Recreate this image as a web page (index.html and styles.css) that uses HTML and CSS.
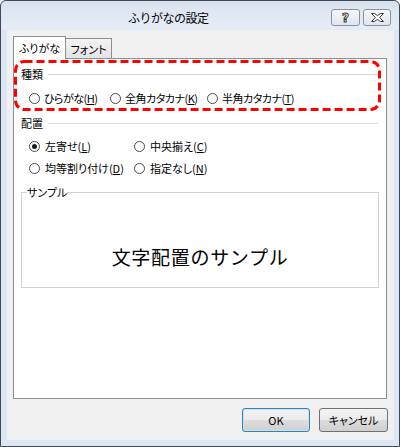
FILE: index.html
```html
<!DOCTYPE html>
<html lang="ja">
<head>
<meta charset="utf-8">
<title>ふりがなの設定</title>
<link rel="stylesheet" href="styles.css">
</head>
<body>
<div class="window">
  <div class="titlebar">
    <div class="title">ふりがなの設定</div>
    <div class="caption-buttons">
      <div class="cap-btn help"><span class="help-glyph">?</span></div>
      <div class="cap-btn close">
        <svg width="13" height="9" viewBox="0 0 13 9"><polygon points="0.5,0.5 3.5,0.5 6.5,2.6 9.5,0.5 12.5,0.5 8.6,4.5 12.5,8.5 9.5,8.5 6.5,6.4 3.5,8.5 0.5,8.5 4.4,4.5" fill="#fff" stroke="#3b3b3b" stroke-width="1" stroke-linejoin="round"/></svg>
      </div>
    </div>
  </div>
  <div class="client">
    <div class="tabs">
      <div class="tab active">ふりがな</div>
      <div class="tab">フォント</div>
    </div>
    <div class="panel">
      <section class="group kind">
        <svg class="highlight" width="367" height="51" viewBox="0 0 367 51"><rect x="1.5" y="1.5" width="364" height="48" rx="9" ry="9" fill="none" stroke="#ff0000" stroke-width="3" stroke-dasharray="8 4"/></svg>
        <div class="group-head"><span>種類</span><span class="rule"></span></div>
        <div class="radio-row">
          <div class="radio"><span class="circle"></span><span>ひらがな(<u>H</u>)</span></div>
          <div class="radio"><span class="circle"></span><span>全角カタカナ(<u>K</u>)</span></div>
          <div class="radio"><span class="circle"></span><span>半角カタカナ(<u>T</u>)</span></div>
        </div>
      </section>
      <section class="group align">
        <div class="group-head"><span>配置</span><span class="rule"></span></div>
        <div class="radio-grid">
          <div class="radio"><span class="circle checked"></span><span>左寄せ(<u>L</u>)</span></div>
          <div class="radio"><span class="circle"></span><span>中央揃え(<u>C</u>)</span></div>
          <div class="radio"><span class="circle"></span><span>均等割り付け(<u>D</u>)</span></div>
          <div class="radio"><span class="circle"></span><span>指定なし(<u>N</u>)</span></div>
        </div>
      </section>
      <fieldset class="sample">
        <legend>サンプル</legend>
        <div class="sample-text">文字配置のサンプル</div>
      </fieldset>
    </div>
    <div class="actions">
      <button class="btn default">OK</button>
      <button class="btn">キャンセル</button>
    </div>
  </div>
</div>
</body>
</html>
```
FILE: styles.css
```css
html, body {
  margin: 0;
  padding: 0;
}
body {
  width: 400px;
  height: 447px;
  overflow: hidden;
  font-family: "Noto Sans CJK JP", "Noto Sans", sans-serif;
  font-size: 11px;
  color: #000;
  background: #fff;
}
.window {
  box-sizing: border-box;
  width: 400px;
  height: 447px;
  border: 1px solid #3e4a57;
  border-radius: 6px 6px 0 0;
  background: linear-gradient(to bottom, #d9e3ef 0, #e6edf6 28px, #dce7f3 29px, #dce7f3 100%);
  padding: 0 5px 6px 6px;
  display: flex;
  flex-direction: column;
}
.titlebar {
  height: 29px;
  flex: none;
  display: flex;
  align-items: flex-start;
}
.title {
  margin-left: 121px;
  padding-top: 9px;
  font-size: 12px;
  line-height: 16px;
  letter-spacing: -0.5px;
  color: #000;
}
.caption-buttons {
  margin-left: auto;
  margin-right: 3px;
  margin-top: 8px;
  display: flex;
  gap: 3px;
}
.cap-btn {
  box-sizing: border-box;
  height: 17px;
  border: 1px solid #8793a1;
  border-radius: 3px;
  background: linear-gradient(to bottom, #f6f8fa, #e1e6ec);
  display: flex;
  align-items: center;
  justify-content: center;
}
.help { width: 29px; }
.close { width: 28px; }
.help-glyph {
  font-family: "DejaVu Sans", sans-serif;
  font-weight: bold;
  font-size: 12px;
  line-height: 12px;
  color: #fff;
  -webkit-text-stroke: 0.9px #333;
}
.client {
  flex: 1;
  background: #f0f0f0;
  display: flex;
  flex-direction: column;
  padding-top: 6px;
}
.tabs {
  display: flex;
  align-items: flex-end;
  height: 22px;
  margin-left: 6px;
  font-feature-settings: "palt";
}
.tab {
  box-sizing: border-box;
  height: 20px;
  width: 46px;
  border: 1px solid #8c8e94;
  border-left: none;
  border-bottom: none;
  background: linear-gradient(to bottom, #f3f3f3, #e4e4e4);
  display: flex;
  align-items: center;
  justify-content: center;
  line-height: 16px;
  padding-top: 1px;
}
.tab.active {
  height: 23px;
  width: 53px;
  border-left: 1px solid #8c8e94;
  background: #fff;
  margin-bottom: -1px;
  position: relative;
  z-index: 1;
  padding-top: 0;
  padding-bottom: 1px;
}
.panel {
  box-sizing: border-box;
  width: 374px;
  height: 341px;
  margin-left: 6px;
  border: 1px solid #8c8e94;
  background: #fff;
  padding: 7px 7px 0 7px;
  font-feature-settings: "palt";
}
.group {
  line-height: 16px;
}
.kind {
  position: relative;
}
.highlight {
  position: absolute;
  left: -7px;
  top: -6px;
}
.group-head {
  display: flex;
  align-items: center;
  height: 16px;
}
.rule {
  flex: 1;
  height: 1px;
  background: #d6d9dd;
  margin-left: 5px;
  margin-right: 1px;
}
.radio {
  display: flex;
  align-items: center;
  height: 16px;
  white-space: nowrap;
}
.radio u {
  text-underline-offset: 1px;
}
.circle {
  box-sizing: border-box;
  width: 11px;
  height: 11px;
  border: 1px solid #4a4a4a;
  border-radius: 50%;
  background: #fff;
  margin-right: 4px;
  flex: none;
  display: flex;
  align-items: center;
  justify-content: center;
}
.circle.checked::after {
  content: "";
  width: 5px;
  height: 5px;
  border-radius: 50%;
  background: #1a1a1a;
}
.radio-row {
  margin-top: 8px;
  margin-left: 8px;
  display: grid;
  grid-template-columns: 81px 97px auto;
  letter-spacing: -0.5px;
}
.align {
  margin-top: 9px;
}
.radio-grid {
  margin-top: 7px;
  margin-left: 8px;
  display: grid;
  grid-template-columns: 105px auto;
  row-gap: 6px;
}
.radio-grid .circle {
  margin-right: 5px;
}
.sample {
  margin: 8px 0 0 0;
  padding: 0;
  width: 358px;
  box-sizing: border-box;
  border: 1px solid #cfd2d6;
  min-width: 0;
}
.sample legend {
  margin-left: 5px;
  padding: 0;
  line-height: 16px;
}
.sample-text {
  padding: 45px 0 18px 0;
  line-height: 24px;
  font-size: 19px;
  letter-spacing: 0.7px;
  text-align: center;
  font-feature-settings: normal;
}
.actions {
  margin-top: 9px;
  display: flex;
  justify-content: flex-end;
  gap: 9px;
  padding-right: 6px;
}
.btn {
  box-sizing: border-box;
  height: 24px;
  width: 69px;
  margin: 0;
  padding: 0;
  font-family: "Noto Sans CJK JP", sans-serif;
  font-size: 11px;
  font-feature-settings: "palt";
  color: #000;
  border: 1px solid #707070;
  border-radius: 3px;
  background: linear-gradient(to bottom, #f2f2f2 0, #ebebeb 50%, #dddddd 51%, #cfcfcf 100%);
}
.btn.default {
  width: 68px;
  border-color: #3c7fb1;
  box-shadow: inset 0 0 0 1px #c5e4f7;
}
```
